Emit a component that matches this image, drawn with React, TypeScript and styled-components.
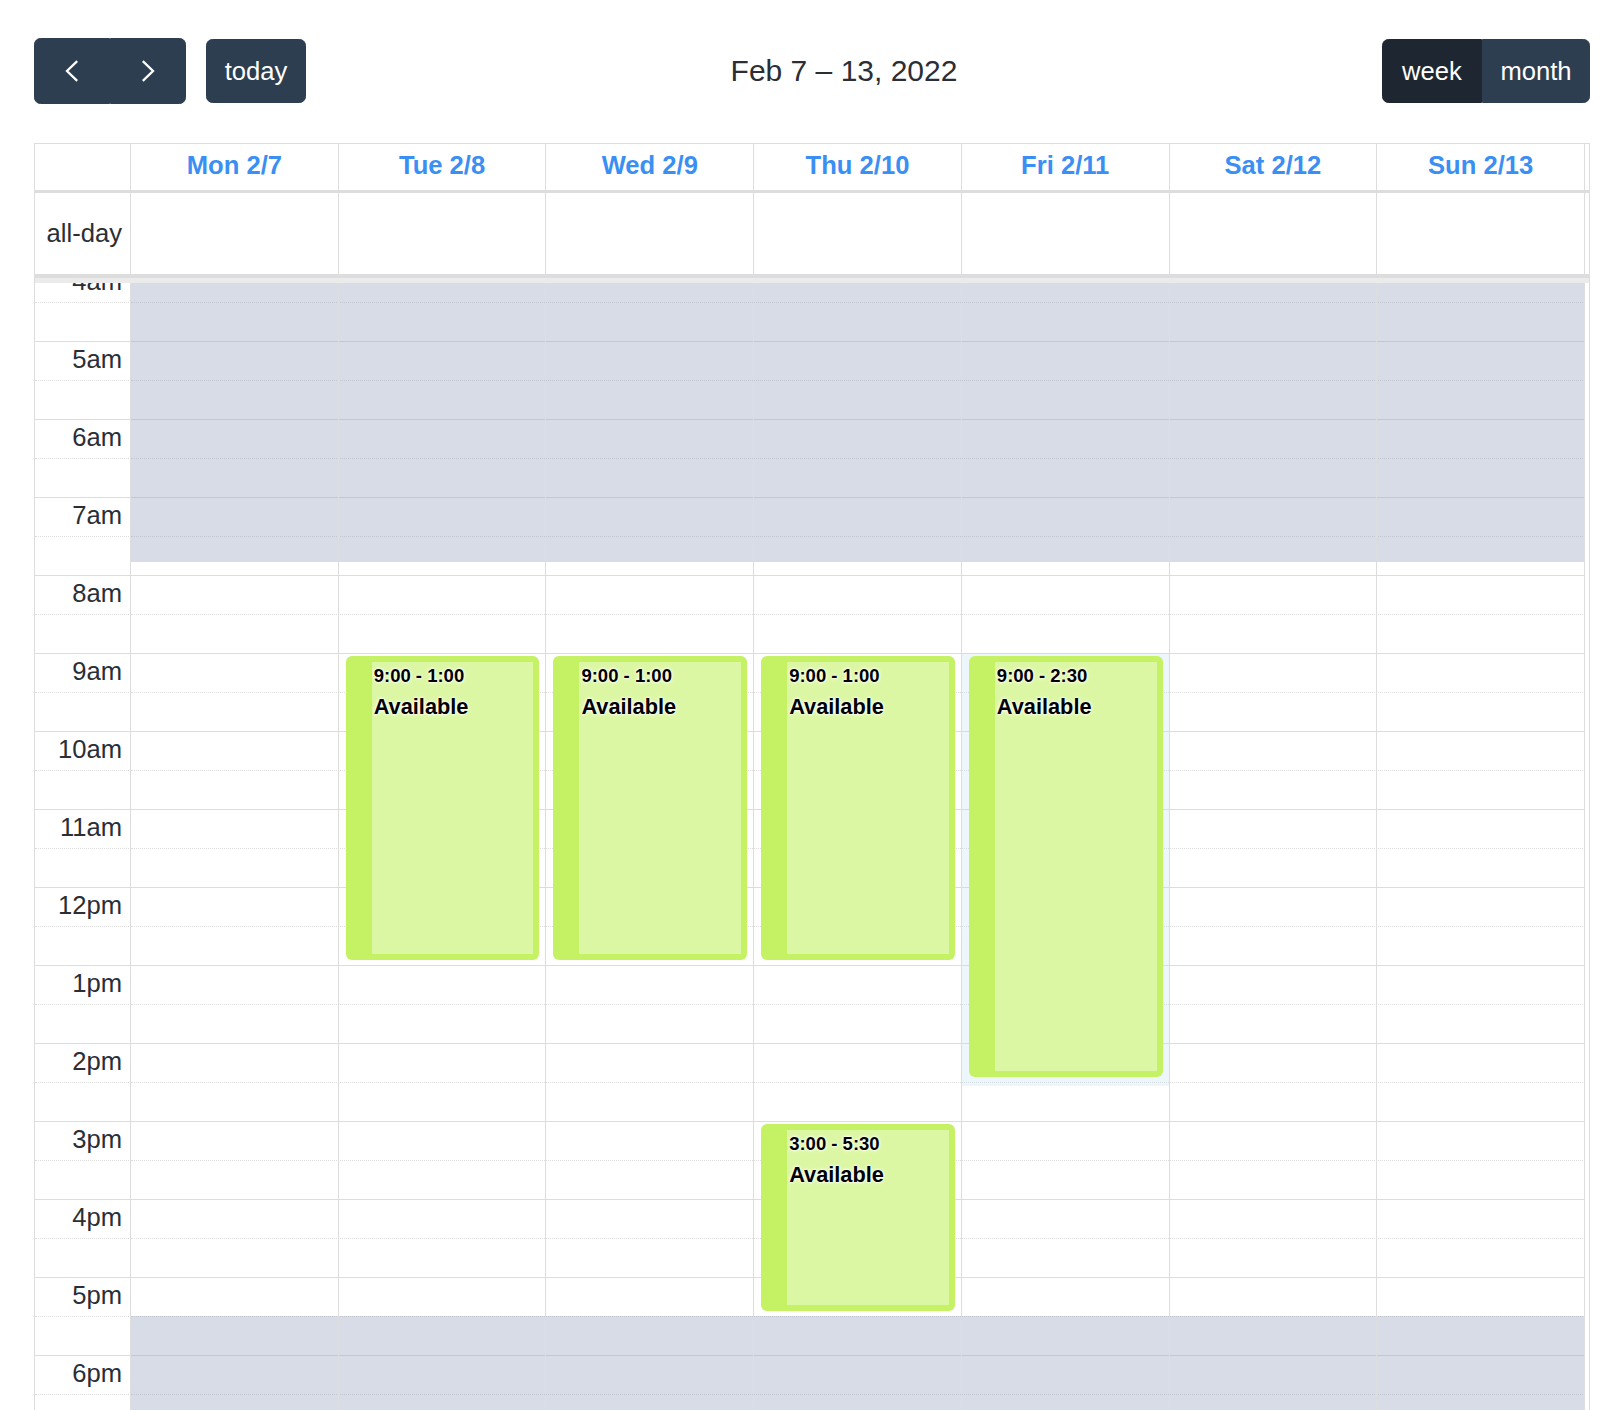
import React from "react";
import styled, { createGlobalStyle } from "styled-components";

const GlobalStyle = createGlobalStyle`
  html, body { margin: 0; padding: 0; background: #fff; overflow: hidden; }
  body {
    font-family: "Liberation Sans", Arial, Helvetica, sans-serif;
    font-size: 25.6px;
    line-height: 1.5;
    color: #2b2e35;
  }
  * { box-sizing: border-box; }
`;

const HOUR = 78;
const START = 4;
const y = (h: number) => (h - START) * HOUR;

const BORDER = "#dddddd";
const COLS = "96px repeat(7, 1fr) 4px";

const Page = styled.div`
  height: 1410px;
  padding: 38px 34px 0;
  display: flex;
  flex-direction: column;
`;

const Toolbar = styled.div`
  display: flex;
  justify-content: space-between;
  align-items: center;
  height: 66px;
  margin-bottom: 39px;
`;

const Chunk = styled.div`
  display: flex;
  align-items: center;
  gap: 20px;
`;

const ButtonGroup = styled.div`
  display: flex;
  align-items: center;
`;

type Pos = "first" | "middle" | "last" | "only";

const radius = (pos: Pos) => {
  const r = "6.4px";
  if (pos === "first") return `${r} 0 0 ${r}`;
  if (pos === "last") return `0 ${r} ${r} 0`;
  if (pos === "middle") return "0";
  return r;
};

const Button = styled.button<{ $w: number; $h?: number; $active?: boolean; $pos: Pos }>`
  width: ${(p) => p.$w}px;
  height: ${(p) => p.$h ?? 64}px;
  display: inline-flex;
  align-items: center;
  justify-content: center;
  padding: 0;
  font-family: inherit;
  font-size: 25.6px;
  line-height: 1.5;
  color: #ffffff;
  background: ${(p) => (p.$active ? "#1e2731" : "#2c3e50")};
  border: 1px solid ${(p) => (p.$active ? "#1e2731" : "#2c3e50")};
  border-radius: ${(p) => radius(p.$pos)};
  cursor: pointer;
`;

const Title = styled.h2`
  margin: 0;
  font-size: 30px;
  font-weight: 400;
  line-height: 1.2;
  color: #2b2e35;
`;

const Calendar = styled.div`
  flex: 1;
  min-height: 0;
  display: flex;
  flex-direction: column;
  border: 1px solid ${BORDER};
  border-bottom: 0;
`;

const HeaderRow = styled.div`
  display: grid;
  grid-template-columns: ${COLS};
  height: 49px;
  border-bottom: 3px solid ${BORDER};
`;

const HeadCell = styled.div<{ $last?: boolean }>`
  border-right: ${(p) => (p.$last ? "0" : `1px solid ${BORDER}`)};
  padding: 2px 4px;
  text-align: center;
  font-weight: 700;
  color: #3b8ff3;
  white-space: nowrap;
`;

const AllDayRow = styled.div`
  display: grid;
  grid-template-columns: ${COLS};
  height: 81px;
`;

const AllDayCell = styled.div<{ $last?: boolean }>`
  border-right: ${(p) => (p.$last ? "0" : `1px solid ${BORDER}`)};
`;

const AxisLabel = styled.div`
  border-right: 1px solid ${BORDER};
  display: flex;
  align-items: center;
  justify-content: flex-end;
  padding-right: 8px;
  white-space: nowrap;
`;

const Divider = styled.div`
  height: 9px;
  border-top: 4px solid ${BORDER};
  background: #ebebeb;
`;

const TimeBody = styled.div`
  flex: 1;
  min-height: 0;
  overflow: hidden;
`;

const TimeCanvas = styled.div`
  display: grid;
  margin-top: -20px;
`;

const SlotLayer = styled.div`
  grid-area: 1 / 1;
`;

const SlotRow = styled.div`
  display: grid;
  grid-template-columns: 96px 1fr 4px;
  height: 39px;
`;

const SlotLabel = styled.div<{ $major: boolean }>`
  border-top: 1px ${(p) => (p.$major ? "solid" : "dotted")} ${BORDER};
  border-right: 1px solid ${BORDER};
  text-align: right;
  padding-right: 8px;
  white-space: nowrap;
  line-height: 1.5;
`;

const LabelText = styled.div`
  margin-top: -2px;
`;

const SlotLane = styled.div<{ $major: boolean }>`
  border-top: 1px ${(p) => (p.$major ? "solid" : "dotted")} ${BORDER};
`;

const ColLayer = styled.div`
  grid-area: 1 / 1;
  display: grid;
  grid-template-columns: ${COLS};
`;

const DayCol = styled.div`
  position: relative;
  border-right: 1px solid ${BORDER};
`;

const Shade = styled.div`
  position: absolute;
  left: 0;
  right: 0;
  background: rgba(152, 163, 190, 0.38);
`;

const Halo = styled.div`
  position: absolute;
  left: 0;
  right: 0;
  background: rgba(186, 224, 238, 0.26);
`;

const EventBox = styled.div`
  position: absolute;
  left: 7px;
  right: 6px;
  display: flex;
  padding: 6px 6px 6px 26px;
  background: #c5f264;
  border-radius: 6px;
`;

const EventInner = styled.div`
  flex: 1;
  background: #dcf7a3;
  padding: 0 2px;
  overflow: hidden;
  color: #000;
  text-shadow: 0 0 2px #fff, 0 0 3px #fff, 0 0 4px rgba(255, 255, 255, 0.8);
`;

const EventTime = styled.div`
  font-size: 18.5px;
  font-weight: 700;
  line-height: 1.5;
  margin-bottom: 1px;
  white-space: pre;
`;

const EventTitle = styled.div`
  font-size: 21.76px;
  font-weight: 700;
  line-height: 1.5;
`;

const Chevron = ({ dir }: { dir: "left" | "right" }) => (
  <svg width="14" height="22" viewBox="0 0 14 22" fill="none">
    <path
      d={dir === "left" ? "M12.2 1.2 L2 11 L12.2 20.8" : "M1.8 1.2 L12 11 L1.8 20.8"}
      stroke="#ffffff"
      strokeWidth="2.3"
      strokeLinejoin="miter"
    />
  </svg>
);

const days = ["Mon 2/7", "Tue 2/8", "Wed 2/9", "Thu 2/10", "Fri 2/11", "Sat 2/12", "Sun 2/13"];

type Ev = { day: number; start: number; end: number; label: string };
const events: Ev[] = [
  { day: 1, start: 9, end: 13, label: "9:00 - 1:00" },
  { day: 2, start: 9, end: 13, label: "9:00 - 1:00" },
  { day: 3, start: 9, end: 13, label: "9:00 - 1:00" },
  { day: 4, start: 9, end: 14.5, label: "9:00 - 2:30" },
  { day: 3, start: 15, end: 17.5, label: "3:00 - 5:30" },
];

const halos = [{ day: 4, start: 9, end: 14.5 }];

const hourLabel = (h: number) => {
  if (h === 12) return "12pm";
  if (h > 12) return `${h - 12}pm`;
  return `${h}am`;
};

const slots: { hour: number; major: boolean }[] = [];
for (let h = START; h < 20; h++) {
  slots.push({ hour: h, major: true });
  slots.push({ hour: h, major: false });
}

const CANVAS_H = slots.length * 39;
const MORNING_END = y(7 + 50 / 60);
const EVENING_START = y(17.5);

export default function App() {
  return (
    <>
      <GlobalStyle />
      <Page>
        <Toolbar>
          <Chunk>
            <ButtonGroup>
              <Button $w={76} $h={66} $pos="first" aria-label="prev">
                <Chevron dir="left" />
              </Button>
              <Button $w={76} $h={66} $pos="last" aria-label="next">
                <Chevron dir="right" />
              </Button>
            </ButtonGroup>
            <Button $w={100} $pos="only">today</Button>
          </Chunk>
          <Title>Feb 7 – 13, 2022</Title>
          <Chunk>
            <ButtonGroup>
              <Button $w={100} $pos="first" $active>
                week
              </Button>
              <Button $w={108} $pos="last">month</Button>
            </ButtonGroup>
          </Chunk>
        </Toolbar>

        <Calendar>
          <HeaderRow>
            <HeadCell />
            {days.map((d) => (
              <HeadCell key={d}>{d}</HeadCell>
            ))}
            <HeadCell $last />
          </HeaderRow>

          <AllDayRow>
            <AxisLabel>all-day</AxisLabel>
            {days.map((d) => (
              <AllDayCell key={d} />
            ))}
            <AllDayCell $last />
          </AllDayRow>

          <Divider />

          <TimeBody>
            <TimeCanvas>
              <SlotLayer>
                {slots.map((s, i) => (
                  <SlotRow key={i}>
                    <SlotLabel $major={s.major}>
                      {s.major && <LabelText>{hourLabel(s.hour)}</LabelText>}
                    </SlotLabel>
                    <SlotLane $major={s.major} />
                    <div />
                  </SlotRow>
                ))}
              </SlotLayer>
              <ColLayer>
                <div />
                {days.map((d, di) => (
                  <DayCol key={d}>
                    <Shade style={{ top: 0, height: MORNING_END }} />
                    <Shade style={{ top: EVENING_START, height: CANVAS_H - EVENING_START }} />
                    {halos
                      .filter((h) => h.day === di)
                      .map((h, i) => (
                        <Halo key={i} style={{ top: y(h.start), height: y(h.end) - y(h.start) + 4 }} />
                      ))}
                    {events
                      .filter((e) => e.day === di)
                      .map((e, i) => (
                        <EventBox
                          key={i}
                          style={{ top: y(e.start) + 3, height: y(e.end) - y(e.start) - 8.5 }}
                        >
                          <EventInner>
                            <EventTime>{e.label}</EventTime>
                            <EventTitle>Available</EventTitle>
                          </EventInner>
                        </EventBox>
                      ))}
                  </DayCol>
                ))}
                <div />
              </ColLayer>
            </TimeCanvas>
          </TimeBody>
        </Calendar>
      </Page>
    </>
  );
}
